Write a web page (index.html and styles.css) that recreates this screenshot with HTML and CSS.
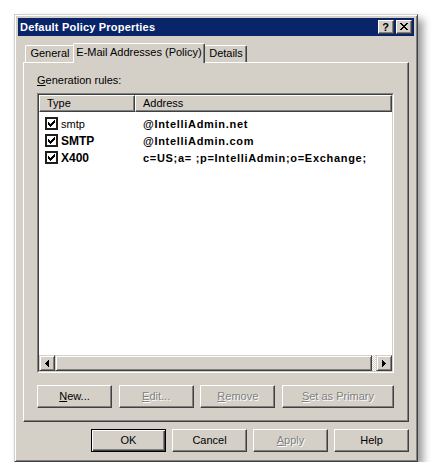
FILE: index.html
```html
<!DOCTYPE html>
<html>
<head>
<meta charset="utf-8">
<title>Default Policy Properties</title>
<link rel="stylesheet" href="styles.css">
</head>
<body>
<div class="window">
  <div class="titlebar">
    <span class="title">Default Policy Properties</span>
    <div class="caption-buttons">
      <span class="cap-btn help-btn">?</span>
      <span class="cap-btn close-btn">
        <svg width="8" height="7" viewBox="0 0 8 7"><path d="M0 0h2v1h-2z M6 0h2v1h-2z M1 1h2v1h-2z M5 1h2v1h-2z M2 2h4v1h-4z M3 3h2v1h-2z M2 4h4v1h-4z M1 5h2v1h-2z M5 5h2v1h-2z M0 6h2v1h-2z M6 6h2v1h-2z" fill="#000"/></svg>
      </span>
    </div>
  </div>
  <div class="client">
    <div class="tabs">
      <div class="tab tab-general">General</div>
      <div class="tab tab-active">E-Mail Addresses (Policy)</div>
      <div class="tab tab-details">Details</div>
    </div>
    <div class="panel">
      <div class="label"><u>G</u>eneration rules:</div>
      <div class="list">
        <div class="list-inner">
          <div class="list-header">
            <div class="hcell hcell-type">Type</div>
            <div class="hcell hcell-addr">Address</div>
          </div>
          <div class="list-body">
            <div class="row">
              <div class="cell-type"><span class="check"></span><span class="type-text">smtp</span></div>
              <div class="cell-addr">@IntelliAdmin.net</div>
            </div>
            <div class="row">
              <div class="cell-type"><span class="check"></span><span class="type-text bold">SMTP</span></div>
              <div class="cell-addr">@IntelliAdmin.com</div>
            </div>
            <div class="row">
              <div class="cell-type"><span class="check"></span><span class="type-text bold">X400</span></div>
              <div class="cell-addr">c=US;a= ;p=IntelliAdmin;o=Exchange;</div>
            </div>
          </div>
          <div class="hscroll">
            <div class="sb-btn">
              <svg width="4" height="7" viewBox="0 0 4 7"><path d="M3 0h1v7h-1z M2 1h1v5h-1z M1 2h1v3h-1z M0 3h1v1h-1z" fill="#000"/></svg>
            </div>
            <div class="sb-thumb"></div>
            <div class="sb-track"></div>
            <div class="sb-btn">
              <svg width="4" height="7" viewBox="0 0 4 7"><path d="M0 0h1v7h-1z M1 1h1v5h-1z M2 2h1v3h-1z M3 3h1v1h-1z" fill="#000"/></svg>
            </div>
          </div>
        </div>
      </div>
      <div class="list-buttons">
        <div class="btn"><u>N</u>ew...</div>
        <div class="btn disabled"><u>E</u>dit...</div>
        <div class="btn disabled"><u>R</u>emove</div>
        <div class="btn wide disabled"><u>S</u>et as Primary</div>
      </div>
    </div>
    <div class="dialog-buttons">
      <div class="btn default">OK</div>
      <div class="btn">Cancel</div>
      <div class="btn disabled"><u>A</u>pply</div>
      <div class="btn">Help</div>
    </div>
  </div>
</div>
</body>
</html>
```

FILE: styles.css
```css
html, body {
  margin: 0;
  padding: 0;
  background: #ffffff;
}

body {
  padding: 14px 0 0 14px;
  font-family: "Liberation Sans", Arial, sans-serif;
  font-size: 11px;
  color: #000;
}

u {
  text-decoration: underline;
  text-underline-offset: 1px;
}

.window {
  box-sizing: border-box;
  width: 404px;
  height: 448px;
  background: #d4d0c8;
  border: 1px solid;
  border-color: #d4d0c8 #404040 #404040 #d4d0c8;
  box-shadow: inset 1px 1px #ffffff, inset -1px -1px #808080, 5px 5px 8px rgba(0, 0, 0, 0.4);
  padding: 3px;
  display: flex;
  flex-direction: column;
}

.titlebar {
  height: 18px;
  background: #0a246a;
  display: flex;
  align-items: center;
  justify-content: space-between;
  padding: 0 2px 0 2px;
}

.title {
  color: #ffffff;
  font-weight: bold;
  font-size: 11px;
  line-height: 18px;
  letter-spacing: 0.2px;
}

.caption-buttons {
  display: flex;
  gap: 2px;
}

.cap-btn {
  box-sizing: border-box;
  width: 16px;
  height: 14px;
  background: #d4d0c8;
  border: 1px solid;
  border-color: #ffffff #404040 #404040 #ffffff;
  box-shadow: inset -1px -1px #808080;
  display: flex;
  align-items: center;
  justify-content: center;
}

.help-btn {
  font-weight: bold;
  font-size: 11px;
  line-height: 12px;
  padding-right: 1px;
}

.close-btn svg {
  display: block;
  margin: 0 1px 1px 0;
}

.client {
  flex: 1;
  display: flex;
  flex-direction: column;
  padding: 0 5px;
}

.tabs {
  margin-top: 7px;
  height: 19px;
  display: flex;
  align-items: flex-end;
  padding-left: 2px;
  position: relative;
  z-index: 1;
}

.tab {
  box-sizing: border-box;
  height: 17px;
  border: 1px solid;
  border-color: #ffffff #404040 transparent #ffffff;
  border-bottom: none;
  border-radius: 2px 2px 0 0;
  box-shadow: inset -1px 0 #808080;
  background: #d4d0c8;
  line-height: 15px;
  text-align: center;
  white-space: nowrap;
}

.tab-general {
  width: 50px;
}

.tab-details {
  width: 44px;
  padding-left: 2px;
}

.tab-active {
  width: 132px;
  height: 20px;
  margin: 0 -2px -1px -2px;
  position: relative;
  z-index: 2;
  line-height: 17px;
}

.panel {
  box-sizing: border-box;
  height: 360px;
  border: 1px solid;
  border-color: #ffffff #404040 #404040 #ffffff;
  box-shadow: inset -1px -1px #808080;
  padding: 11px 14px 0 13px;
  display: flex;
  flex-direction: column;
}

.label {
  line-height: 13px;
  height: 13px;
}

.list {
  box-sizing: border-box;
  margin-top: 6px;
  height: 280px;
  border: 1px solid;
  border-color: #808080 #ffffff #ffffff #808080;
}

.list-inner {
  box-sizing: border-box;
  height: 100%;
  border: 1px solid;
  border-color: #404040 #d4d0c8 #d4d0c8 #404040;
  background: #ffffff;
  display: flex;
  flex-direction: column;
}

.list-header {
  display: flex;
  height: 17px;
}

.hcell {
  box-sizing: border-box;
  height: 17px;
  background: #d4d0c8;
  border: 1px solid;
  border-color: #ffffff #404040 #404040 #ffffff;
  box-shadow: inset -1px -1px #808080;
  line-height: 15px;
  padding-left: 7px;
}

.hcell-type {
  width: 96px;
}

.hcell-addr {
  flex: 1;
}

.list-body {
  flex: 1;
  padding-top: 3px;
}

.row {
  display: flex;
  height: 17px;
  align-items: center;
}

.cell-type {
  width: 96px;
  display: flex;
  align-items: center;
  padding-left: 6px;
  box-sizing: border-box;
}

.check {
  box-sizing: border-box;
  width: 13px;
  height: 13px;
  border: 2px solid #1e1e1e;
  background: #ffffff url("data:image/svg+xml,%3Csvg xmlns='http://www.w3.org/2000/svg' width='9' height='9' viewBox='0 0 9 9'%3E%3Cpath d='M7 1h1v1h-1z M6 2h2v1h-2z M1 3h1v1h-1z M5 3h3v1h-3z M1 4h2v1h-2z M4 4h3v1h-3z M1 5h5v1h-5z M2 6h3v1h-3z M3 7h1v1h-1z' fill='%23000'/%3E%3C/svg%3E") no-repeat 0 0;
  flex: none;
}

.type-text {
  margin-left: 3px;
  font-size: 11px;
}

.type-text.bold {
  font-weight: bold;
  font-size: 12px;
}

.cell-addr {
  padding-left: 8px;
  font-weight: bold;
  letter-spacing: 0.7px;
  white-space: nowrap;
}

.hscroll {
  display: flex;
  height: 16px;
  background: repeating-conic-gradient(#ffffff 0 25%, #d4d0c8 0 50%) 0 0 / 2px 2px;
}

.sb-btn {
  box-sizing: border-box;
  width: 16px;
  height: 16px;
  background: #d4d0c8;
  border: 1px solid;
  border-color: #d4d0c8 #404040 #404040 #d4d0c8;
  box-shadow: inset 1px 1px #ffffff, inset -1px -1px #808080;
  display: flex;
  align-items: center;
  justify-content: center;
  flex: none;
}

.sb-thumb {
  box-sizing: border-box;
  width: 317px;
  height: 16px;
  background: #d4d0c8;
  border: 1px solid;
  border-color: #d4d0c8 #404040 #404040 #d4d0c8;
  box-shadow: inset 1px 1px #ffffff, inset -1px -1px #808080;
  flex: none;
}

.sb-track {
  flex: 1;
}

.list-buttons {
  margin-top: 12px;
  display: flex;
  justify-content: space-between;
}

.btn {
  box-sizing: border-box;
  width: 75px;
  height: 23px;
  background: #d4d0c8;
  border: 1px solid;
  border-color: #ffffff #404040 #404040 #ffffff;
  box-shadow: inset -1px -1px #808080;
  display: flex;
  align-items: center;
  justify-content: center;
  white-space: nowrap;
  padding-bottom: 1px;
}

.btn.wide {
  width: 112px;
}

.btn.disabled {
  color: #808080;
  text-shadow: 1px 1px #ffffff;
}

.btn.default {
  border-color: #000000;
  box-shadow: inset 1px 1px #ffffff, inset -1px -1px #404040, inset -2px -2px #808080;
}

.dialog-buttons {
  margin-top: 7px;
  display: flex;
  justify-content: flex-end;
  gap: 6px;
}
```
